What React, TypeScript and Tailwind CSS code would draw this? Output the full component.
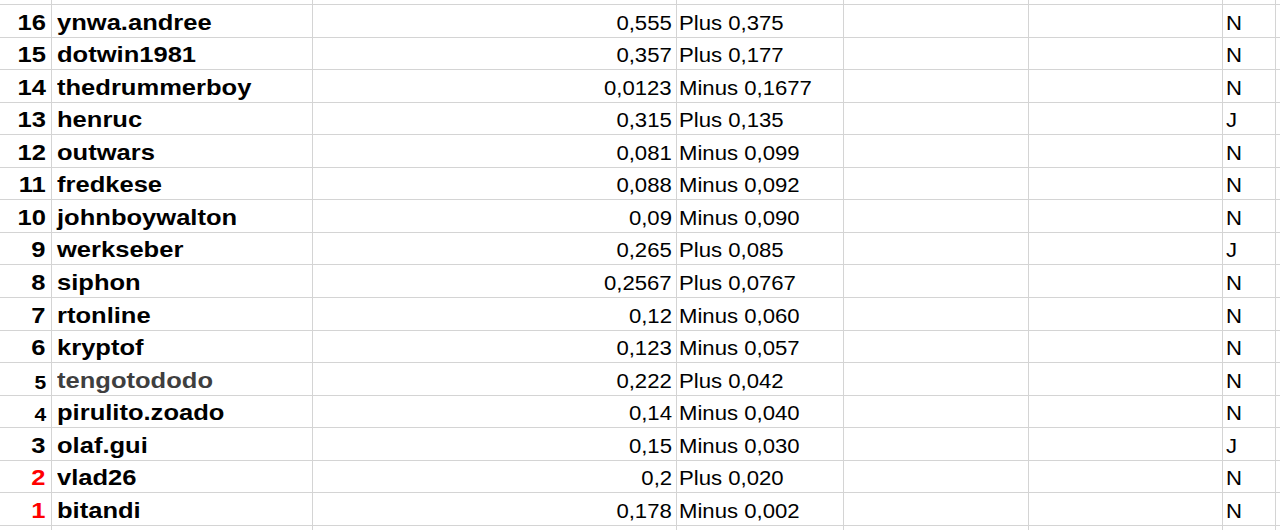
import { clsx as cn } from 'clsx';

type Row = {
  rank: number;
  name: string;
  value: string;
  diff: string;
  flag: string;
  rankTone?: 'red' | 'small';
  muted?: boolean;
};

const rows: Row[] = [
  { rank: 16, name: 'ynwa.andree', value: '0,555', diff: 'Plus 0,375', flag: 'N' },
  { rank: 15, name: 'dotwin1981', value: '0,357', diff: 'Plus 0,177', flag: 'N' },
  { rank: 14, name: 'thedrummerboy', value: '0,0123', diff: 'Minus 0,1677', flag: 'N' },
  { rank: 13, name: 'henruc', value: '0,315', diff: 'Plus 0,135', flag: 'J' },
  { rank: 12, name: 'outwars', value: '0,081', diff: 'Minus 0,099', flag: 'N' },
  { rank: 11, name: 'fredkese', value: '0,088', diff: 'Minus 0,092', flag: 'N' },
  { rank: 10, name: 'johnboywalton', value: '0,09', diff: 'Minus 0,090', flag: 'N' },
  { rank: 9, name: 'werkseber', value: '0,265', diff: 'Plus 0,085', flag: 'J' },
  { rank: 8, name: 'siphon', value: '0,2567', diff: 'Plus 0,0767', flag: 'N' },
  { rank: 7, name: 'rtonline', value: '0,12', diff: 'Minus 0,060', flag: 'N' },
  { rank: 6, name: 'kryptof', value: '0,123', diff: 'Minus 0,057', flag: 'N' },
  { rank: 5, name: 'tengotododo', value: '0,222', diff: 'Plus 0,042', flag: 'N', rankTone: 'small', muted: true },
  { rank: 4, name: 'pirulito.zoado', value: '0,14', diff: 'Minus 0,040', flag: 'N', rankTone: 'small' },
  { rank: 3, name: 'olaf.gui', value: '0,15', diff: 'Minus 0,030', flag: 'J' },
  { rank: 2, name: 'vlad26', value: '0,2', diff: 'Plus 0,020', flag: 'N', rankTone: 'red' },
  { rank: 1, name: 'bitandi', value: '0,178', diff: 'Minus 0,002', flag: 'N', rankTone: 'red' },
];

// row heights so the grid lines land on the same pixels as the sheet (~32.56px each)
const tall = [true, false, true, false, true, false, true, false, true, true, false, true, false, true, false, true];

function Cells({ children, className }: { children?: React.ReactNode; className?: string }) {
  return <div className={cn('flex h-full items-end border-r border-[#d4d4d4]', className)}>{children}</div>;
}

function GridRow({ className, children }: { className?: string; children?: React.ReactNode }) {
  return <div className={cn('flex border-b border-[#d4d4d4]', className)}>{children}</div>;
}

function EmptyCells() {
  return (
    <>
      <Cells className="w-[52px]" />
      <Cells className="w-[261px]" />
      <Cells className="w-[364px]" />
      <Cells className="w-[167px]" />
      <Cells className="w-[185px]" />
      <Cells className="w-[194px]" />
      <Cells className="w-[53px]" />
      <div className="flex-1" />
    </>
  );
}

export default function App() {
  return (
    <div className="h-[530px] w-[1280px] overflow-hidden bg-white font-['Liberation_Sans',Arial,sans-serif] text-black">
      <GridRow className="h-[5px]">
        <EmptyCells />
      </GridRow>

      {rows.map((r, i) => (
        <GridRow key={r.rank} className={tall[i] ? 'h-[33px]' : 'h-[32px]'}>
          <Cells className="w-[52px] justify-end pr-[5px] pb-[3px]">
            <span
              className={cn(
                'inline-block origin-right scale-x-[1.135] font-bold leading-none',
                r.rankTone === 'small' ? 'text-[18.5px]' : 'text-[22.5px]',
                r.rankTone === 'red' && 'text-[#ff0000]',
              )}
            >
              {r.rank}
            </span>
          </Cells>
          <Cells className="w-[261px] pl-[5px] pb-[3px]">
            <span
              className={cn(
                'inline-block origin-left scale-x-[1.135] whitespace-nowrap text-[22.5px] font-bold leading-none',
                r.muted && 'text-[#3f3f3f]',
              )}
            >
              {r.name}
            </span>
          </Cells>
          <Cells className="w-[364px] justify-end pr-[4px] pb-[4px]">
            <span className="inline-block origin-right scale-x-[1.135] text-[19.5px] leading-none">{r.value}</span>
          </Cells>
          <Cells className="w-[167px] pl-[2px] pb-[4px]">
            <span className="inline-block origin-left scale-x-[1.135] whitespace-nowrap text-[19.5px] leading-none">
              {r.diff}
            </span>
          </Cells>
          <Cells className="w-[185px]" />
          <Cells className="w-[194px]" />
          <Cells className="w-[53px] pl-[3px] pb-[4px]">
            <span className="inline-block origin-left scale-x-[1.135] text-[19.5px] leading-none">{r.flag}</span>
          </Cells>
          <div className="flex-1" />
        </GridRow>
      ))}

      <GridRow className="h-[10px]">
        <EmptyCells />
      </GridRow>
    </div>
  );
}
